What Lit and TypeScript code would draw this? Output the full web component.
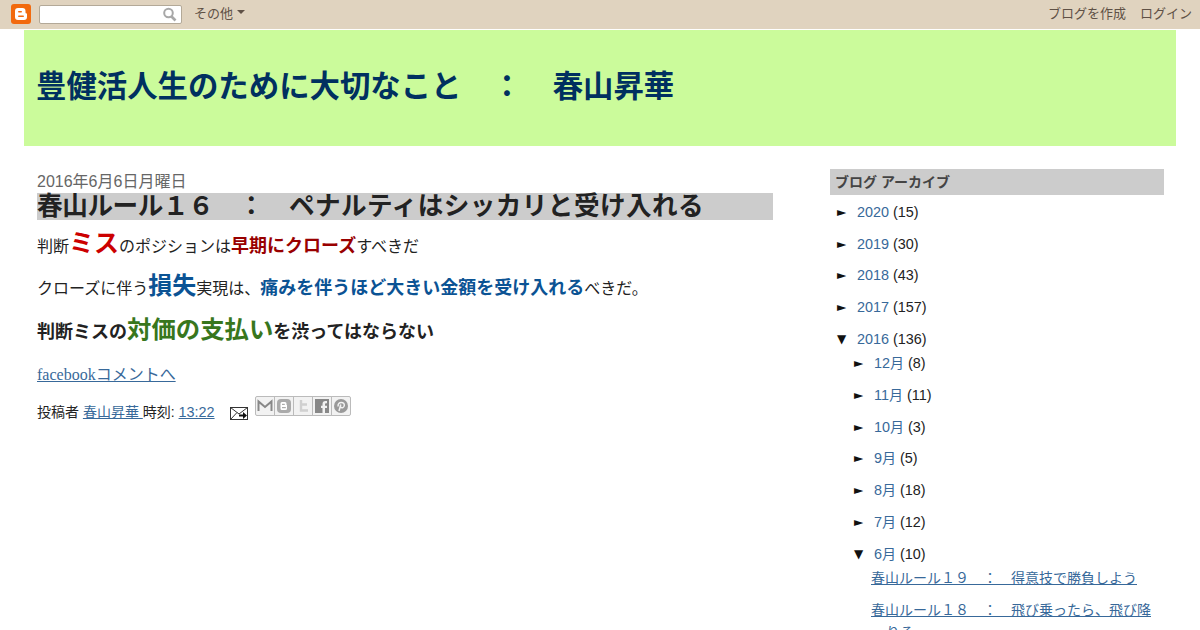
import { LitElement, html, css } from "lit";
import { customElement } from "lit/decorators.js";

@customElement("app-root")
export class AppRoot extends LitElement {
  static styles = css`
    :host { display: block; width: 1200px; height: 630px; overflow: hidden; background: #fff; font-family: "Liberation Sans", "Noto Sans CJK JP", sans-serif; color: #222; }
    a { color: #38699a; }
    .plain { text-decoration: none; }
    .nav { height: 29px; background: #e0d3bf; display: flex; align-items: center; padding: 0 8px 5px 11px; box-sizing: border-box; font-size: 13px; color: #5f5146; margin-bottom: 1px; }
    .logo { width: 20px; height: 20px; display: block; margin: 4px 8px 0 0; }
    .search { width: 143px; height: 19px; margin: 4px 12px 0 0; box-sizing: border-box; background: #fff; border: 1px solid #b3a998; border-radius: 2px; display: flex; align-items: center; justify-content: flex-end; padding-right: 4px; }
    .more { display: flex; align-items: center; gap: 4px; }
    .caret { width: 0; height: 0; border: 4px solid transparent; border-top-color: #5f5146; border-bottom: 0; }
    .spacer { flex: 1; }
    .nav-links { display: flex; gap: 14px; }
    .header { margin: 0 24px; height: 116px; background: #cbfb9b; display: flex; align-items: center; padding: 0 12px 9px; box-sizing: border-box; }
    h1 { margin: 0; font-size: 30.4px; font-weight: bold; color: #003060; white-space: pre; }
    .cols { display: flex; padding: 23px 36px 0 37px; }
    .main { width: 736px; }
    .date { font-size: 16px; color: #666; line-height: 18px; height: 18px; margin-top: 4px; white-space: pre; }
    h3 { margin: 2px 0 0; background: #cccccc; font-size: 25.6px; line-height: 27px; height: 27px; font-weight: bold; color: #222; white-space: pre; }
    .h3a { letter-spacing: -0.4px; }
    .h3b { letter-spacing: 0.45px; }
    .line { font-size: 16px; white-space: pre; color: #222; display: flex; align-items: baseline; }
    .red { color: #990000; font-weight: bold; font-size: 18px; }
    .redb { color: #cc0000; font-weight: bold; font-size: 25px; }
    .blue { color: #0b5394; font-weight: bold; font-size: 18px; }
    .blueb { color: #0b5394; font-weight: bold; font-size: 24px; }
    .green { color: #38761d; font-weight: bold; font-size: 24.4px; }
    .l1 { height: 28px; margin-top: 9px; line-height: 28px; }
    .l2 { height: 30px; margin-top: 14px; line-height: 30px; }
    .l3 { height: 30px; margin-top: 14px; line-height: 30px; font-size: 18px; font-weight: bold; }
    .fb { font-family: "Liberation Serif", "Noto Sans CJK JP", serif; font-size: 16px; margin-top: 20px; line-height: 20px; }
    .foot { display: flex; align-items: flex-start; font-size: 14px; margin-top: 12px; color: #222; white-space: pre; height: 24px; }
    .foot .txt { margin-top: 6px; line-height: 18px; }
    .time { font-size: 14.4px; }
    .mail { margin: 10px 7px 0 15px; display: block; }
    .share { display: flex; margin-top: -1px; }
    .share span { width: 18px; height: 18px; border: 1px solid #bbb; margin-left: -1px; display: block; background: #f2f2f2; }
    .share span:first-child { margin-left: 0; border-radius: 2px 0 0 2px; }
    .share span:last-child { border-radius: 0 2px 2px 0; }
    .share svg { display: block; width: 18px; height: 18px; }
    .side { margin-left: 57px; width: 334px; }
    .side h2 { margin: 0; background: #ccc; height: 26px; line-height: 26px; font-size: 14px; font-weight: bold; color: #444; padding-left: 5px; white-space: pre; }
    .rows { font-size: 14.4px; color: #222; }
    .row { height: 16px; line-height: 16px; padding: 9px 0 6.75px; display: flex; align-items: center; white-space: pre; }
    .row:nth-child(2) { padding-bottom: 6.25px; }
    .row:nth-child(3) { padding-bottom: 7.25px; }
    .row.open { padding-bottom: 0; margin-bottom: -1px; }
    .arrow { font-size: 12px; width: 20px; flex: none; font-family: "DejaVu Sans", sans-serif; color: #111; }
    .r0 { padding-left: 7px; }
    .r1 { padding-left: 24px; }
    .tuki { font-size: 14px; }
    .posts { margin-top: 6px; padding-left: 56px; font-size: 14px; line-height: 22px; }
    .post { margin-bottom: 10px; text-indent: -15px; }
  `;

  yr(t: string, n: string) {
    return html`<div class="row r0"><span class="arrow">►</span><a class="plain" href="#">${t}</a> (${n})</div>`;
  }
  mo(t: string, n: string, open = false) {
    return html`<div class="row r1 ${open ? "open" : ""}"><span class="arrow">${open ? "▼" : "►"}</span><a class="plain" href="#">${t}<span class="tuki">月</span></a> (${n})</div>`;
  }

  render() {
    return html`
      <div class="nav">
        <svg class="logo" viewBox="0 0 20 20"><rect width="20" height="20" rx="3" fill="#f26a0e"/><path d="M7 4h4.500A3 3 0 0 1 14.500 7v1.500a1 1 0 0 0 1 1h.5V13a3 3 0 0 1-3 3H7a3 3 0 0 1-3-3V7a3 3 0 0 1 3-3z" fill="#fff"/><rect x="7" y="7" width="4" height="1.600" rx=".8" fill="#f26a0e"/><rect x="7" y="11.400" width="6" height="1.600" rx=".8" fill="#f26a0e"/></svg>
        <div class="search">
          <svg width="15" height="15" viewBox="0 0 15 15"><circle cx="6.500" cy="6" r="4.300" fill="none" stroke="#a8a8a8" stroke-width="2"/><path d="M9.500 9.500l4 4" stroke="#a8a8a8" stroke-width="2.600"/></svg>
        </div>
        <div class="more">その他<span class="caret"></span></div>
        <div class="spacer"></div>
        <div class="nav-links"><span>ブログを作成</span><span>ログイン</span></div>
      </div>
      <div class="header"><h1>豊健活人生のために大切なこと　：　春山昇華</h1></div>
      <div class="cols">
        <div class="main">
          <div class="date">2016年6月6日月曜日</div>
          <h3><span class="h3a">春山ルール１６　：　</span><span class="h3b">ペナルティはシッカリと受け入れる</span></h3>
          <div class="line l1">判断<span class="redb">ミス</span>のポジションは<span class="red">早期にクローズ</span>すべきだ</div>
          <div class="line l2">クローズに伴う<span class="blueb">損失</span>実現は、<span class="blue">痛みを伴うほど大きい金額を受け入れる</span>べきだ。</div>
          <div class="line l3">判断ミスの<span class="green">対価の支払い</span>を渋ってはならない</div>
          <div class="fb"><a href="#">facebookコメントへ</a></div>
          <div class="foot">
            <span class="txt">投稿者 <a href="#">春山昇華 </a>時刻: <a class="time" href="#">13:22</a></span>
            <svg class="mail" width="18" height="13" viewBox="0 0 18 13"><rect x=".5" y=".5" width="17" height="12" fill="#fff" stroke="#333"/><path d="M.5.5L9 7l8.500-6.500M.5 12.500L7 5.500" fill="none" stroke="#333"/><path d="M9 7.500h4V5l4 3.500-4 3.500V9.500H9z" fill="#111"/></svg>
            <div class="share">
              <span><svg viewBox="0 0 18 18"><path d="M2.500 14V4.500L9 10l6.500-5.500V14" fill="none" stroke="#888" stroke-width="2"/></svg></span>
              <span><svg viewBox="0 0 18 18"><rect x="2" y="2" width="14" height="14" rx="4" fill="#aaa"/><path d="M7 5h3a1.500 1.500 0 0 1 1.500 1.500v1.500h.5v3.500a1.500 1.500 0 0 1-1.500 1.500H7a1.500 1.500 0 0 1-1.500-1.500v-5A1.500 1.500 0 0 1 7 5z" fill="#fff"/><rect x="7" y="6.800" width="2.800" height="1.200" fill="#aaa"/><rect x="7" y="10" width="3.800" height="1.200" fill="#aaa"/></svg></span>
              <span><svg viewBox="0 0 18 18"><path d="M7 3v10.500h7M7 7.500h6" fill="none" stroke="#d0d0d0" stroke-width="2.400"/></svg></span>
              <span><svg viewBox="0 0 18 18"><rect x="2" y="2" width="14" height="14" fill="#888"/><path d="M12 16V11h2V8.800h-2V7.500c0-.8.400-1.200 1.200-1.200H14V4h-1.500C10.500 4 9.500 5.200 9.500 7v1.800H8V11h1.500v5z" fill="#f2f2f2"/></svg></span>
              <span><svg viewBox="0 0 18 18"><circle cx="9" cy="9" r="7" fill="#999"/><path d="M7 14l1.800-6.500M6.200 9.500C5.500 7 7.500 5.500 9.300 5.500c2 0 3.200 1.200 3 3-.2 1.800-2.400 3.200-3.800 1.600" fill="none" stroke="#f2f2f2" stroke-width="1.500"/></svg></span>
            </div>
          </div>
        </div>
        <div class="side">
          <h2>ブログ アーカイブ</h2>
          <div class="rows">
            ${this.yr("2020", "15")}
            ${this.yr("2019", "30")}
            ${this.yr("2018", "43")}
            ${this.yr("2017", "157")}
            <div class="row r0 open"><span class="arrow">▼</span><a class="plain" href="#">2016</a> (136)</div>
            ${this.mo("12", "8")}
            ${this.mo("11", "11")}
            ${this.mo("10", "3")}
            ${this.mo("9", "5")}
            ${this.mo("8", "18")}
            ${this.mo("7", "12")}
            ${this.mo("6", "10", true)}
            <div class="posts">
              <div class="post"><a href="#">春山ルール１９　：　得意技で勝負しよう</a></div>
              <div class="post"><a href="#">春山ルール１８　：　飛び乗ったら、飛び降りる</a></div>
            </div>
          </div>
        </div>
      </div>
    `;
  }
}
